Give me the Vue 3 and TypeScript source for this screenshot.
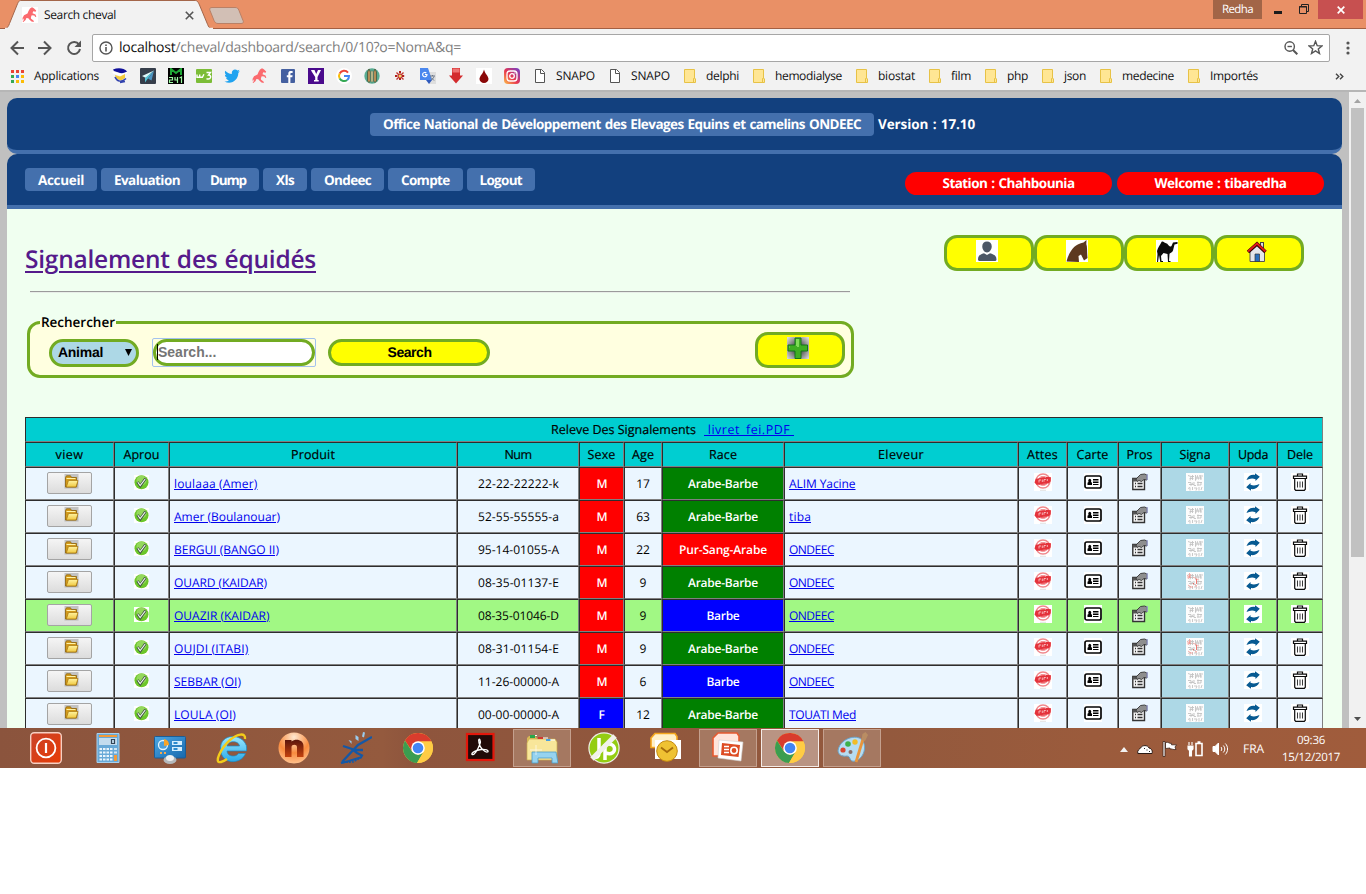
<script setup lang="ts">
import type { Directive } from 'vue'

interface Bookmark { icon: string; label?: string; width?: number }
interface Animal {
  name: string; nameW: number
  num: string
  sexe: 'M' | 'F'
  age: number
  race: string; raceW: number; raceColor: string
  owner: string; ownerW: number
  marked?: boolean
  active?: boolean
}

/* Spreads the letters of a label over the given width in pixels. */
const vFit: Directive<HTMLElement, number> = {
  mounted(el, { value }) {
    const width = el.getBoundingClientRect().width
    const count = (el.textContent ?? '').length
    if (value && count) el.style.letterSpacing = `${(value - width) / count}px`
  },
}

const bookmarks: Bookmark[] = [
  { icon: 'poste' }, { icon: 'plane' }, { icon: 'm241' }, { icon: 'w3' }, { icon: 'bird' },
  { icon: 'horse' }, { icon: 'facebook' }, { icon: 'yahoo' }, { icon: 'google' }, { icon: 'pencils' },
  { icon: 'flower' }, { icon: 'translate' }, { icon: 'redarrow' }, { icon: 'drop' }, { icon: 'insta' },
  { icon: 'page', label: 'SNAPO', width: 39 }, { icon: 'page', label: 'SNAPO', width: 39 },
  { icon: 'folder', label: 'delphi', width: 33 }, { icon: 'folder', label: 'hemodialyse', width: 67 },
  { icon: 'folder', label: 'biostat', width: 37 }, { icon: 'folder', label: 'film', width: 20 },
  { icon: 'folder', label: 'php', width: 21 }, { icon: 'folder', label: 'json', width: 22 },
  { icon: 'folder', label: 'medecine', width: 52 }, { icon: 'folder', label: 'Importés', width: 48 },
]

const nav = [
  { label: 'Accueil', width: 46 }, { label: 'Evaluation', width: 66 }, { label: 'Dump', width: 36 },
  { label: 'Xls', width: 18 }, { label: 'Ondeec', width: 47 }, { label: 'Compte', width: 48.5 },
  { label: 'Logout', width: 42.5 },
]

const columns = [
  { label: 'view', width: 28 }, { label: 'Aprou', width: 36 }, { label: 'Produit', width: 44 },
  { label: 'Num', width: 27 }, { label: 'Sexe', width: 28 }, { label: 'Age', width: 22 },
  { label: 'Race', width: 28 }, { label: 'Eleveur', width: 46 }, { label: 'Attes', width: 31 },
  { label: 'Carte', width: 32 }, { label: 'Pros', width: 26 }, { label: 'Signa', width: 31 },
  { label: 'Upda', width: 30 }, { label: 'Dele', width: 26 },
]

const green = { race: 'Arabe-Barbe', raceW: 70, raceColor: 'green' }
const blue = { race: 'Barbe', raceW: 33, raceColor: 'blue' }
const ondeec = { owner: 'ONDEEC', ownerW: 45 }

const animals: Animal[] = [
  { name: 'loulaaa (Amer)', nameW: 83.5, num: '22-22-22222-k', sexe: 'M', age: 17, ...green, owner: 'ALIM Yacine', ownerW: 66.5 },
  { name: 'Amer (Boulanouar)', nameW: 106, num: '52-55-55555-a', sexe: 'M', age: 63, ...green, owner: 'tiba', ownerW: 22 },
  { name: 'BERGUI (BANGO II)', nameW: 105, num: '95-14-01055-A', sexe: 'M', age: 22, race: 'Pur-Sang-Arabe', raceW: 88, raceColor: 'red', ...ondeec },
  { name: 'OUARD (KAIDAR)', nameW: 93, num: '08-35-01137-E', sexe: 'M', age: 9, ...green, ...ondeec, marked: true },
  { name: 'OUAZIR (KAIDAR)', nameW: 95.5, num: '08-35-01046-D', sexe: 'M', age: 9, ...blue, ...ondeec, active: true },
  { name: 'OUJDI (ITABI)', nameW: 74.5, num: '08-31-01154-E', sexe: 'M', age: 9, ...green, ...ondeec, marked: true },
  { name: 'SEBBAR (OI)', nameW: 67, num: '11-26-00000-A', sexe: 'M', age: 6, ...blue, ...ondeec },
  { name: 'LOULA (OI)', nameW: 62, num: '00-00-00000-A', sexe: 'F', age: 12, ...green, owner: 'TOUATI Med', ownerW: 67 },
]

const shortcuts = ['user', 'horsehead', 'camel', 'home']
const actions = ['stamp', 'card', 'props']
const tasks = [
  { icon: 'power' }, { icon: 'calc' }, { icon: 'panel' }, { icon: 'ie' }, { icon: 'nitro' }, { icon: 'splash' },
  { icon: 'chrome' }, { icon: 'acrobat' }, { icon: 'explorer', open: true }, { icon: 'jdown' }, { icon: 'outlook' },
  { icon: 'ppt', open: true }, { icon: 'chrome', open: true, front: true }, { icon: 'paint', open: true },
]
</script>

<template>
  <svg class="defs" width="0" height="0">
    <defs>
      <linearGradient id="gInsta" x1="0" y1="1" x2="1" y2="0"><stop offset="0" stop-color="#fdc04a" /><stop offset=".45" stop-color="#e8374f" /><stop offset="1" stop-color="#6a3fd0" /></linearGradient>
      <linearGradient id="gFolder" x1="0" y1="0" x2="0" y2="1"><stop offset="0" stop-color="#fff3a0" /><stop offset="1" stop-color="#f0c840" /></linearGradient>
      <radialGradient id="gBack" r=".65"><stop offset=".3" stop-color="#555" /><stop offset="1" stop-color="#d8d8d8" /></radialGradient>
      <linearGradient id="gPower" x1="0" y1="0" x2="1" y2="1"><stop offset="0" stop-color="#c9432a" /><stop offset="1" stop-color="#e83b04" /></linearGradient>
      <linearGradient id="gSky" x1="0" y1="0" x2="1" y2="1"><stop offset="0" stop-color="#4ba7e4" /><stop offset="1" stop-color="#1768ad" /></linearGradient>
      <linearGradient id="gIe" x1="0" y1="0" x2="0" y2="1"><stop offset="0" stop-color="#9be9ff" /><stop offset="1" stop-color="#29a9e8" /></linearGradient>
      <radialGradient id="gNitro" cy=".15" r=".85"><stop offset="0" stop-color="#ffe8d0" /><stop offset=".6" stop-color="#f98b3e" /><stop offset="1" stop-color="#ffc08c" /></radialGradient>
      <linearGradient id="gNitroN" x1="0" y1="0" x2="0" y2="1"><stop offset="0" stop-color="#5a150c" /><stop offset="1" stop-color="#c4420e" /></linearGradient>
    </defs>
    <symbol id="apps" viewBox="0 0 13 13">
      <path fill="#ea4335" d="M0 0h3v3H0zM5 0h3v3H5zM10 0h3v3h-3z" /><path fill="#34a853" d="M0 5h3v3H0zM0 10h3v3H0z" />
      <path fill="#4285f4" d="M5 5h3v3H5z" /><path fill="#fbbc05" d="M10 5h3v3h-3zM5 10h3v3H5zM10 10h3v3h-3z" />
    </symbol>
    <symbol id="horse" viewBox="0 0 16 16">
      <path fill="#fb6a6e" d="M10 0.300l1.800 1 2.400 2.200-.6 1.200-2.400-.4-.7 1.900 3 1.400.8 2.200-1 .3-1-1.600-2.600-.2-.8 2 .2 1.500 2.400 1.600.4 1.600-2.400-.5-2.200-2-1-1.300-1.900-.1-.8 2-2.200 1.800-.8-.4 1.300-1.600.2-1.800L.8 13.500.5 11 2 8.200 5.500 6.500 6.500 4 8 1.600z" />
    </symbol>
    <symbol id="poste" viewBox="0 0 16 16">
      <path fill="#10109a" d="M1 1.500C6-.5 12 0 15 3.500L11 6 2 3z" /><path fill="#fff" d="M0 3.500l9 2 6-1.500v1.500L9 8 1 5.500z" />
      <path fill="#f5cc3c" d="M3 7l5 1.500 5-2.500v4l-4 2.500-5-2z" /><path fill="none" stroke="#3343ae" stroke-width="1.500" d="M3 9c2 5 7 5.500 11 1.500M8 14.500l5-1" />
    </symbol>
    <symbol id="plane" viewBox="0 0 16 16"><rect width="16" height="16" rx="1" fill="#363e4b" /><path fill="#dff8fa" d="M14 2.500L2 8l4 2z" /><path fill="#56c1d4" d="M14 2.500L5 10v4.500L7.500 11z" /><path fill="#4d94c4" d="M14 2.500L8 10.500l3.500 2z" /></symbol>
    <symbol id="m241" viewBox="0 0 16 16"><rect width="16" height="16" /><path fill="none" stroke="#1fa635" stroke-width="2" d="M3 7V1l5 4 5-4v6" /><path fill="none" stroke="#9cf9a1" stroke-width="1.200" d="M1 9.500h3.500v2.500H1.500v2.500H5M7 9v3h3M9.500 9v6M11.500 10l2-1v6" /></symbol>
    <symbol id="w3" viewBox="0 0 16 16"><rect y="1" width="16" height="14" rx="1" fill="#7cbd37" /><path fill="none" stroke="#fff" stroke-width="1.400" d="M1 6.500v2.700h2.700V6.500v2.700h2.700l1.500-3M10.500 4.500h4L12.500 7c3.300 0 3 5-2 3.800" /></symbol>
    <symbol id="bird" viewBox="0 0 16 16"><path fill="#20a3f0" d="M.5 13.500c1.700.2 3.200-.2 4.500-1.200-1.500-.1-2.500-1-3-2.200h1.400C1.900 9.600.9 8.400.9 6.800l1.400.4C.9 6 .5 4.300 1.300 2.700c1.700 2 3.900 3.200 6.600 3.400C7.300 3.300 9.100 1.500 11 1.500c1 0 1.900.4 2.500 1.100l2-.8-1.300 1.900 1.700-.4-1.600 1.700C14.500 11.500 7.500 17.500.5 13.500z" /></symbol>
    <symbol id="facebook" viewBox="0 0 16 16"><rect x="1" y="1" width="14" height="14" rx="1" fill="#4560a0" /><path fill="#fff" d="M8.300 15V9.300H6.800V7.200h1.500V5.500C8.300 3.600 9.500 3 11 3h1.600v2h-1.200c-.8 0-1 .4-1 1v1.200h2.200l-.3 2.100h-1.900V15z" /></symbol>
    <symbol id="yahoo" viewBox="0 0 16 16"><rect width="16" height="16" fill="#4a0a8c" /><path fill="#fff" d="M3 2h3.500l1.700 4L10 2h3L9.500 9v3h1.200v1.500H6V12h1.200V9L3.500 3.300z" /></symbol>
    <symbol id="google" viewBox="0 0 16 16"><circle cx="8" cy="8" r="8" fill="#fff" /><path fill="none" stroke="#ea4335" stroke-width="2" d="M12 4.600A5 5 0 0 0 3.700 5.500" /><path fill="none" stroke="#fbbc05" stroke-width="2" d="M3.700 5.500a5 5 0 0 0 0 5" /><path fill="none" stroke="#34a853" stroke-width="2" d="M3.700 10.500a5 5 0 0 0 7.500 1.500" /><path fill="none" stroke="#4285f4" stroke-width="2" d="M11.200 12A5 5 0 0 0 13 8H8" /></symbol>
    <symbol id="pencils" viewBox="0 0 16 16"><ellipse cx="8" cy="8" rx="7.700" ry="7.700" fill="#58ac92" /><path fill="#b58d56" stroke="#4b5f44" stroke-width=".9" d="M3.500 4L5 1l1.500 3v9L5 14.500 3.500 13zM9.500 4L11 1l1.500 3v9L11 14.500 9.500 13z" /><path fill="#cdc08c" stroke="#4b7f6c" stroke-width=".6" d="M6.800 3h2.400v11H6.800z" /></symbol>
    <symbol id="flower" viewBox="0 0 16 16"><path stroke="#b0201c" stroke-width="2" d="M8 3v10M3 8h10" stroke-dasharray="2.500 .8" /><path stroke="#c4352c" stroke-width="1.400" d="M4.500 4.500l7 7M11.500 4.500l-7 7" /><circle cx="8" cy="8" r="1.300" fill="#f4d95c" /></symbol>
    <symbol id="translate" viewBox="0 0 16 16"><path fill="#dedede" d="M6 4h10v12H9z" /><path fill="#4a87ee" d="M0 0h8l4 12H0z" /><path fill="none" stroke="#fff" stroke-width="1.100" d="M6.300 5A2.200 2.200 0 1 0 7 6.500H5" /><path fill="none" stroke="#6b7788" d="M10 8h5M12.500 7v1M14 8.500c-.5 2-2 3-3 3.500M11 9.500l3 3" /><path fill="#2d59bd" d="M6 12h6l-3 4z" /></symbol>
    <symbol id="redarrow" viewBox="0 0 16 16"><path fill="#d32b2d" d="M4 0h8v7.500h3L8 15.500 1 7.500h3z" /><path fill="#ee7372" d="M4.500.5h7v4h-7z" /></symbol>
    <symbol id="drop" viewBox="0 0 16 16"><rect width="16" height="16" fill="#fff" /><path fill="#8a0808" d="M8 1.500C9 6 12.500 8 12.500 11a4.500 4 0 0 1-9 0C3.500 8 7 6 8 1.500z" /></symbol>
    <symbol id="insta" viewBox="0 0 16 16"><rect width="16" height="16" rx="4" fill="url(#gInsta)" /><rect x="3" y="3" width="10" height="10" rx="3" fill="none" stroke="#fff" stroke-width="1.300" /><circle cx="8" cy="8" r="2.300" fill="none" stroke="#fff" stroke-width="1.300" /><circle cx="11" cy="5" r=".7" fill="#fff" /></symbol>
    <symbol id="page" viewBox="0 0 16 16"><path fill="#fff" stroke="#555" d="M3.500 1.500h6l3 3v10h-9z" /><path fill="none" stroke="#555" d="M8.500 1.500v4h4" /></symbol>
    <symbol id="folder" viewBox="0 0 16 16"><path fill="#ffe694" stroke="#e7c246" d="M2.500 1.500h10v8.500l1 1v3.500h-11z" /><path fill="none" stroke="#e7c246" d="M11.500 14v-3.500h1" /></symbol>
    <symbol id="user" viewBox="0 0 22 22"><rect width="22" height="23" fill="#fff" /><path fill="#4c5766" d="M11 1.500c3 0 5 2 4.700 5.500-.2 2.500-2.200 5.500-4.700 5.500S6.500 9.500 6.300 7C6 3.500 8 1.500 11 1.500zM2 19.500c0-4 2-5 6-6.300L11 15l3-1.800c4 1.300 6.500 2.300 6.500 6.300 0 1.500-1 1.500-2 1.500H4.500c-1.500 0-2.500 0-2.500-1.500z" /></symbol>
    <symbol id="horsehead" viewBox="0 0 22 22"><rect width="22" height="23" fill="#fff" /><path fill="#5d3820" d="M.5 21.500C3 12 8 4 17.500 2.500L20.500 0l-.2 4c1.200 3 .5 8 1.200 14l-3.500 2.500-3-6-2.500 1.500.5 6z" /></symbol>
    <symbol id="camel" viewBox="0 0 22 22"><rect width="22" height="23" fill="#fff" /><path fill="#0b0b0b" d="M1 11c1-4 3-5.500 4.500-9C7 .5 9 4 11 3.500c1.500 2 3 4 4.500 2.500L17 2.500 21.500 2v1.800l-3 .7-1.500 6c-1 2.500-3 2-3.500 3.500L13 21h1.500v1H12l-.5-8-4-1-2.500 3 .5 5H7v1H4.300L3 15l-1 7H1l.5-8z" /></symbol>
    <symbol id="home" viewBox="0 0 22 22"><path fill="#444" d="M14 2h4v8h-4z" /><path fill="#ddd" d="M15 3h2v5h-2z" /><path fill="#e4e6ea" stroke="#555" d="M4 12v9.500h14.500V12L11 5z" /><path fill="none" stroke="#300" stroke-width="3.600" d="M2 12L11 4l8.500 8" /><path fill="none" stroke="#e11a1a" stroke-width="2" d="M2 11.500L11 3.500l8.500 8" /><path fill="#2a6fbd" stroke="#333" stroke-width=".7" d="M9 14h4.500v7.500H9z" /></symbol>
    <symbol id="plus" viewBox="0 0 22 22"><rect width="22" height="23" fill="url(#gBack)" /><path fill="#3fae22" stroke="#14741a" d="M8 1h6v7h6.500v6H14v7.500H8V14H1V8h7z" /><path fill="#9cee6d" opacity=".7" d="M9 2h3v8h-2v-1H2.500V11H2V9h7z" /></symbol>
    <symbol id="gold" viewBox="0 0 15 15"><rect x=".5" width="14" height="14.500" fill="#8a8a8a" opacity=".45" /><path fill="#d29a1b" stroke="#8d620a" stroke-width=".8" d="M1.500 3.500l1-1.700h4l1 1.700h5V7h1L12.500 13h-11z" /><path fill="url(#gFolder)" stroke="#a9760d" stroke-width=".7" d="M4.500 6.500H14l-2 6.500H2.300z" /><path stroke="#fff3a8" d="M2.500 4.500h9" /></symbol>
    <symbol id="check" viewBox="0 0 15 15"><rect width="15" height="15" fill="#fff" /><circle cx="7.500" cy="7.300" r="7" fill="#6cc62a" /><circle cx="7.500" cy="5.500" r="5" fill="#a4e070" opacity=".7" /><path fill="none" stroke="#435345" stroke-width="2.700" d="M3.500 7l2.800 4L11.500 3.500" /><path fill="none" stroke="#f4fff0" stroke-width="1.100" d="M3.800 7.200L6.200 10.500 11.200 4" /></symbol>
    <symbol id="stamp" viewBox="0 0 18 18"><rect width="18" height="18" fill="#fff" /><circle cx="9" cy="8" r="7" fill="none" stroke="#f0888c" stroke-width="1.400" /><circle cx="9" cy="8" r="4.900" fill="#ee6268" /><path fill="#e4323b" d="M.5 9.500l1.200-3.700L7 5l5-1.300 5 .5-.3 4-2 2.300-4.700-.3-4 1.500-3.500 0z" /><path stroke="#fbd3d4" stroke-width=".8" fill="none" d="M5 9.500V7h2M8.300 9V6.500M10 8.700V6.500h1.800M13.300 8V6" /><path stroke="#f3b6b8" stroke-width=".7" fill="none" d="M6 4.500c2-1.200 4-1.200 6 0M6 11.800c2 1.200 4 1 6-.3" /><path stroke="#ccc" d="M6 17.300h6" stroke-width=".6" /></symbol>
    <symbol id="card" viewBox="0 0 18 18"><rect width="18" height="18" fill="#fff" /><rect x="1" y="3" width="16" height="12" rx="1.800" fill="none" stroke="#050505" stroke-width="1.700" /><path d="M3.500 12V9.800l1-.9a1.500 2 0 1 1 2.500 0l1 .9V12zM9 6h5.500v1.500H9zM9 8.500h5.500V10H9zM9 11h5.500v1H9z" /></symbol>
    <symbol id="props" viewBox="0 0 18 18"><path fill="#f4f4f4" stroke="#333" stroke-width="1.400" d="M1.800 5.500h11.700v11H1.800z" /><path fill="#555" d="M2 5.500h3.500v3H2z" /><path stroke="#333" stroke-width="1.300" d="M4 10.500h1M6.500 10.500h5M4 13.500h1M6.500 13.500h5" /><path fill="#8e8e8e" stroke="#333" stroke-width=".9" d="M5 6l4.500-4.500 4-.5 2.500 1v5l-3-.5-2.500 2L8 7.500 6 8.500z" /><path fill="#9ba0d0" d="M15.500 1h1.300v6h-1.300z" /></symbol>
    <symbol id="signa" viewBox="0 0 18 18"><rect width="18" height="18" fill="#fdfdfd" /><g fill="none" stroke="#c3c3c3" stroke-width=".9"><path d="M2 2.500l3 1-1 4M6.500 2v5M5 3.500h3M9.500 2v5.500l2-5 1 4M14 2l1 5M13 3h4M3.500 5.500h4M11 5h5" /><path d="M2 9.500h3v3l2-3M8 9v3.500h2M11 9.500h5M12 8.500v4M15 9v3M2 15.500l2-1v3M6.500 14v3M8 15h3l-1 2.500M13 14v3.500M16 14l-1 3M3 11.500h5M11 12h4" /></g></symbol>
    <symbol id="signared" viewBox="0 0 18 18"><g fill="none" stroke="#f09a94" stroke-width=".8"><path d="M1 3l4 3M5 2L2 7M3.500 1v5M1 5h4M7 5l6 3M2 13l3 2M4 15h3" /><path stroke="#e8594f" d="M7.500 11v1.500M10.500 7v5M10 13v1.500" /></g></symbol>
    <symbol id="update" viewBox="0 0 18 18"><rect width="18" height="18" fill="#fff" /><path fill="#075a92" d="M2.500 7C4 3 7 1.300 11 2V.3l4.800 3.500L11.500 8V6.200C8.500 5 5.500 5.500 2.500 7zM15.500 11c-1.500 4-4.500 5.700-8.500 5v1.700l-4.800-3.500L6.500 10v1.800c3 1.200 6 .7 9-.8z" /></symbol>
    <symbol id="trash" viewBox="0 0 18 18"><rect width="18" height="18" fill="#fff" /><path fill="none" stroke="#0c0c0c" stroke-width="1.200" d="M2.500 3.200h13v2.300h-13zM6.500 3v-2h5v2M3.700 5.700v10.500l1 1.200h8.600l1-1.200V5.700" /><path stroke="#222" stroke-width=".9" d="M6.500 8.500v6M9 8.500v6M11.500 8.500v6" /></symbol>
    <symbol id="power" viewBox="0 0 32 32"><rect x=".7" y=".7" width="30.600" height="30.600" rx="3.500" fill="url(#gPower)" stroke="#f6cfc2" stroke-width="1.400" /><circle cx="16" cy="16" r="9.400" fill="none" stroke="#fff" stroke-width="1.800" /><path stroke="#fff" stroke-width="2.200" d="M16 11v10" /></symbol>
    <symbol id="calc" viewBox="0 0 32 32"><path fill="#68a9d7" stroke="#a9d1ed" d="M5 1.500h22v29H5z" /><path fill="#f29a3a" d="M7 3h18v2H7z" /><path fill="#c3dcee" d="M7 6h18v7H7z" /><path fill="none" stroke="#345" stroke-width="1.200" d="M19.500 7.500h3v4h-3z" /><path stroke="#eaf5fc" stroke-width="2.200" stroke-dasharray="2.500 1" d="M7.500 17h14M7.500 20.500h14M7.500 24h14M7.500 27.500h14" /><path stroke="#cfe4f2" stroke-width="2.200" d="M22 17h3M22 20.500h3" /><path fill="#f29a3a" d="M22 23h3v6h-3z" /></symbol>
    <symbol id="panel" viewBox="0 0 32 32"><rect x=".5" y="4.500" width="31" height="21.500" rx="1" fill="url(#gSky)" stroke="#1c5d95" /><circle cx="9" cy="13" r="4.500" fill="#4ba0dc" stroke="#e2f4ff" stroke-width="1.300" /><path fill="#f7a428" d="M10 7a6 6 0 0 1 5 6l-5 1z" /><path fill="#d4efff" d="M18 9h10v4H18zM18 15h10v4H18z" /><path fill="#2c8ccf" d="M19.500 10h4v2h-4zM19.500 16h4v2h-4z" /><path fill="#f5aa4f" d="M6 20h2v2H6zM10 20h2v2h-2z" /><ellipse cx="16" cy="28" rx="6.500" ry="4" fill="#b4b8bb" /><ellipse cx="16" cy="26" rx="4" ry="3" fill="#f0f0f0" /></symbol>
    <symbol id="ie" viewBox="0 0 32 32"><path fill="url(#gIe)" stroke="#178bc8" stroke-width=".7" d="M30.500 19H11c.3 6 9 6.500 11.500 2.500h7C25 33 5 33 4.500 17S26 1 30.300 13.500c.3 2 .4 3.500.2 5.500zM11 14h12.500c-.5-5.500-11.500-6-12.500 0z" /><path fill="none" stroke="#f3cc1b" stroke-width="2.400" d="M29 7c1-7-8-5-15 1C5 16-3 32 5 30c2-.4 4-1.500 6-3" /></symbol>
    <symbol id="nitro" viewBox="0 0 32 32"><circle cx="16" cy="16" r="15.500" fill="url(#gNitro)" /><path fill="url(#gNitroN)" d="M7 8h6.500v1.500C18 6 25.500 8 25.500 14v11H19V15c0-3-5.500-3-5.500 0v10H7z" /></symbol>
    <symbol id="splash" viewBox="0 0 32 32"><path fill="none" stroke="#1558a6" stroke-width="2.300" d="M32 5L18 13 2 30M3 14l9 3 5 4 6 3M1 31l8-2 13-4M15 18h8" /><path stroke="#1558a6" stroke-width="1.400" stroke-dasharray="2 1" fill="none" d="M3 30.500l10-.5 9-5" /><path fill="#9acbee" d="M23 0l2 .5-1 5-2-1zM15.500 3l3 2 0 4-3-2zM8.500 8l3 1v3z" /></symbol>
    <symbol id="chrome" viewBox="0 0 32 32"><circle cx="16" cy="16" r="15" fill="#fc4" /><path fill="#d93c2d" d="M3 8.500A15 15 0 0 1 29.500 9.500H16L10 19z" /><path fill="#3b9d50" d="M3 8.500A15 15 0 0 0 15 31l6.500-11L16 23l-6-3.500z" /><path fill="#fc4" d="M29.500 9.500A15 15 0 0 1 15 31l7-12 0-6-3-3.500z" /><circle cx="16" cy="16" r="6.800" fill="#fff" /><circle cx="16" cy="16" r="5.300" fill="#4285f4" /></symbol>
    <symbol id="acrobat" viewBox="0 0 32 32"><rect x="3" y="2" width="26.500" height="26" fill="#210a08" stroke="#e3170b" stroke-width="2.200" /><path fill="none" stroke="#fff" stroke-width="1.300" d="M8 22.500c-1-2 5-4.500 9-5 5-.5 7.500 1 7 2.200-2 1.300-9-3-9.300-11.500.5-2.500 2.300 0 1.300 3.500-2 6-6 12-8 10.800z" /></symbol>
    <symbol id="explorer" viewBox="0 0 32 32"><path fill="#d7b955" d="M1 6l2-2h6l2 2v22H1z" /><path fill="#f8e69a" stroke="#ccae4e" stroke-width=".7" d="M3 7h26l2 3v18H1V11z" /><path fill="#2aa64a" d="M4 3h5v3H4z" /><path fill="#cf3830" d="M12 5h5v2h-5z" /><path fill="#4aa0e0" d="M20 7h5v2h-5z" /><path stroke="#fff" d="M9 3.500h2M17 6h5M24 8h5" /><path fill="#96d3ef" stroke="#4b9cc6" stroke-width=".8" d="M6 20h24l2 11h-6v-5H12v5H6z" /><path stroke="#fff" stroke-width=".8" d="M4 18h12M10 13v10" opacity=".8" /></symbol>
    <symbol id="jdown" viewBox="0 0 32 32"><circle cx="16" cy="16" r="15.700" fill="#f0f0ea" /><circle cx="16" cy="16" r="14.500" fill="#94cd13" /><path fill="none" stroke="#fff" stroke-width="3.500" d="M11 6v15c0 4-2 5-5 4M17 12v16M17 13c12-5 13 12 1 8" /><path stroke="#f1f2ea" stroke-width="5" d="M27 4L4 27" /></symbol>
    <symbol id="outlook" viewBox="0 0 32 32"><path fill="#fff0c8" stroke="#f5a61c" stroke-width="1.600" d="M5 1.500h20l2 3v11H1V6z" /><path fill="#fff" d="M5 8h26v19H5z" /><circle cx="17" cy="19" r="10.300" fill="#efc233" stroke="#c58a10" /><path fill="none" stroke="#a66d0c" stroke-width="1.800" d="M11 15.500l6 4.500 6-4.500" /></symbol>
    <symbol id="ppt" viewBox="0 0 32 32"><path fill="#ffe4da" stroke="#e65a30" stroke-width="1.600" d="M6 1h19l2 3v20H1V6z" /><path fill="#fff" stroke="#d0d0d0" stroke-width=".6" d="M7 8l24 2-2 19-23-3z" /><path fill="#dd4c24" d="M10 11l18 2-1.500 12L9 23z" /><path stroke="#fff" stroke-width="1.600" d="M12 14.500h5M12 17.500h5M12 20.500h5" /><circle cx="22" cy="18.500" r="3.200" fill="none" stroke="#fff" stroke-width="1.600" /></symbol>
    <symbol id="paint" viewBox="0 0 32 32"><path fill="#b6dcf2" stroke="#6ba6cc" d="M2 19C3 8 18 2 25 7c7 6 3 20-6 22-6 1.500-4-5-8-5-4 .500-8 0-9-5z" /><circle cx="7" cy="18" r="2.600" fill="#d74731" /><circle cx="12" cy="12" r="2.800" fill="#3cb14a" /><circle cx="19" cy="10" r="2.700" fill="#f2bc27" /><circle cx="14.500" cy="20" r="2" fill="#8a6d66" /><path stroke="#e9953c" stroke-width="2.800" d="M27 7l-7 23" /><path fill="#b98d63" d="M25.500 8l1-6 3-2 2.500 3-3 6z" /></symbol>
  </svg>

  <div class="screen">
    <header class="titlebar">
      <div class="tab">
        <svg class="tabshape" width="208" height="29"><path d="M0 28.500C3 28 3.500 26 4.500 23.500L12 5C13.500 1.500 14 .5 16 .5H190c2 0 3 1 4.500 4.500L202 23c2 5 2.500 5.500 6 5.500z" fill="#f2f2f2" stroke="#a4664a" /><path d="M0 28.500h208" stroke="#f2f2f2" stroke-width="1.500" /></svg>
        <div class="tabinner">
          <span class="fav"><svg width="16" height="16"><use href="#horse" /></svg></span>
          <span v-fit="72" class="fit">Search cheval</span>
          <svg class="tabclose" width="9" height="9" viewBox="0 0 9 9"><path d="M.8.8l7.400 7.400M8.200.8L.8 8.200" stroke="#555" stroke-width="1.600" /></svg>
        </div>
      </div>
      <svg class="newtab" width="35" height="18"><path d="M3 .5h23c2 0 3 .5 4 3l4 10c1 2 0 3-2 3H9c-2 0-3-1-4-3l-4-10c-.8-2 0-3 2-3z" fill="#d2bfb5" stroke="#b98066" /></svg>
      <div class="controls">
        <span class="profile"><span v-fit="31" class="fit">Redha</span></span>
        <svg class="minimize" width="8" height="3"><path d="M0 0h8v3H0z" fill="#1c1c1c" /></svg>
        <svg class="restore" width="10" height="10"><path d="M2.500 2V.5h7v7H8M.5 2.500h7v7h-7z" fill="none" stroke="#222" /><path d="M0 3h8" stroke="#222" /></svg>
        <span class="close"><svg width="8" height="8"><path d="M.7.7l6.600 6.600M7.300.7L.7 7.300" stroke="#fff" stroke-width="1.700" /></svg></span>
      </div>
    </header>

    <div class="toolbar">
      <svg class="arrows" width="44" height="16" fill="none" stroke="#555" stroke-width="2">
        <path d="M15 8H3M9 1.500L2.500 8 9 14.500" /><path d="M29 8h12M35 1.500L41.500 8 35 14.500" />
      </svg>
      <svg class="reload" width="16" height="16" fill="none" stroke="#555" stroke-width="2"><path d="M13 4.500A6 6 0 1 0 14 9" /><path d="M15 .5v6.500H8.500z" fill="#555" stroke="none" /></svg>
      <div class="omnibox">
        <svg width="14" height="14" fill="none" stroke="#555" stroke-width="1.400"><circle cx="7" cy="7" r="6" /><path d="M7 6v4.500M7 3.500v1.400" stroke-width="1.600" /></svg>
        <span class="url"><span v-fit="342" class="fit"><b>localhost</b>/cheval/dashboard/search/0/10?o=NomA&amp;q=</span></span>
        <svg class="lens" width="14" height="14" fill="none" stroke="#555" stroke-width="1.400"><circle cx="5.700" cy="5.500" r="4.700" /><path d="M3.500 5.500h4.400" /><path d="M9 9l4.300 4.300" stroke-width="2" /></svg>
        <svg width="15" height="15" fill="none" stroke="#555" stroke-width="1.400"><path d="M7.500 1.300l1.700 4.400 4.700.3-3.600 2.900 1.200 4.600-4-2.600-4 2.600 1.200-4.600L1.100 6l4.700-.3z" /></svg>
      </div>
      <svg class="kebab" width="4" height="14" fill="#555"><circle cx="2" cy="2" r="1.600" /><circle cx="2" cy="7" r="1.600" /><circle cx="2" cy="12" r="1.600" /></svg>
    </div>

    <div class="bookmarks">
      <svg width="13" height="13"><use href="#apps" /></svg>
      <span class="applabel"><span v-fit="65" class="fit">Applications</span></span>
      <span v-for="(b, i) in bookmarks" :key="i" class="bookmark">
        <svg width="16" height="16"><use :href="`#${b.icon}`" /></svg>
        <span v-if="b.label" v-fit="b.width ?? 0" class="fit marklabel">{{ b.label }}</span>
      </span>
      <svg class="more" width="9" height="7" fill="none" stroke="#444" stroke-width="1.400"><path d="M1 .8l2.800 2.700L1 6.200M5 .8l2.800 2.700L5 6.200" /></svg>
    </div>

    <div class="viewport">
      <main class="page">
        <div class="banner">
          <span class="pill"><span v-fit="478" class="fit">Office National de Développement des Elevages Equins et camelins ONDEEC</span></span>
          <span v-fit="97" class="fit">Version : 17.10</span>
        </div>
        <nav class="menu">
          <span v-for="n in nav" :key="n.label" class="pill"><span v-fit="n.width" class="fit">{{ n.label }}</span></span>
          <span class="status first"><span v-fit="132" class="fit">Station : Chahbounia</span></span>
          <span class="status"><span v-fit="132" class="fit">Welcome : tibaredha</span></span>
        </nav>
        <section class="content">
          <div class="topline">
            <h1><span v-fit="291" class="fit">Signalement des équidés</span></h1>
            <div class="shortcuts">
              <span v-for="s in shortcuts" :key="s" class="iconbtn"><svg width="22" height="23" viewBox="0 0 22 23"><use :href="`#${s}`" width="22" height="22" /></svg></span>
            </div>
          </div>
          <div class="rule"></div>
          <fieldset class="search">
            <legend><span v-fit="74" class="fit">Rechercher</span></legend>
            <div class="fields">
              <div class="select"><span v-fit="45" class="fit">Animal</span><svg width="7" height="7"><path d="M0 0h7L3.500 7z" /></svg></div>
              <div class="ring"><input type="text" placeholder="Search..." /><i class="caret"></i></div>
              <button class="submit" type="button"><span v-fit="44" class="fit">Search</span></button>
              <span class="iconbtn add"><svg width="22" height="23" viewBox="0 0 22 23"><use href="#plus" width="22" height="22" /></svg></span>
            </div>
          </fieldset>

          <div class="table">
            <div class="caption cell head">
              <span v-fit="145" class="fit">Releve Des Signalements</span>
              <a v-fit="90" class="fit">&nbsp;livret_fei.PDF&nbsp;</a>
            </div>
            <div class="row headrow">
              <div v-for="c in columns" :key="c.label" class="cell head"><span v-fit="c.width" class="fit">{{ c.label }}</span></div>
            </div>
            <div v-for="a in animals" :key="a.name" class="row" :class="{ active: a.active }">
              <div class="cell"><span class="open"><svg width="15" height="15"><use href="#gold" /></svg></span></div>
              <div class="cell"><svg class="checkicon" width="15" height="15"><use href="#check" /></svg></div>
              <div class="cell left"><a v-fit="a.nameW" class="fit">{{ a.name }}</a></div>
              <div class="cell number"><span v-fit="81" class="fit">{{ a.num }}</span></div>
              <div class="cell tinted" :class="a.sexe === 'M' ? 'red' : 'blue'"><span v-fit="a.sexe === 'M' ? 10 : 6" class="fit">{{ a.sexe }}</span></div>
              <div class="cell"><span class="fit">{{ a.age }}</span></div>
              <div class="cell tinted" :class="a.raceColor"><span v-fit="a.raceW" class="fit">{{ a.race }}</span></div>
              <div class="cell left"><a v-fit="a.ownerW" class="fit">{{ a.owner }}</a></div>
              <div v-for="k in actions" :key="k" class="cell"><svg class="act" width="18" height="18"><use :href="`#${k}`" /></svg></div>
              <div class="cell pale"><svg class="act" width="18" height="18"><use href="#signa" /><use v-if="a.marked" href="#signared" /></svg></div>
              <div class="cell"><svg class="act" width="18" height="18"><use href="#update" /></svg></div>
              <div class="cell"><svg class="act" width="18" height="18"><use href="#trash" /></svg></div>
            </div>
          </div>
        </section>
      </main>
      <div class="scrollbar">
        <svg width="7" height="4"><path d="M3.500 0L7 4H0z" fill="#a3a3a3" /></svg>
        <div class="thumb"></div>
        <svg class="down" width="7" height="4"><path d="M3.500 4L7 0H0z" fill="#505050" /></svg>
      </div>
    </div>

    <footer class="taskbar">
      <span v-for="(t, i) in tasks" :key="i" class="task" :class="{ opened: t.open, front: t.front }">
        <svg width="32" height="32"><use :href="`#${t.icon}`" /></svg>
      </span>
      <div class="tray">
        <svg width="8" height="5"><path d="M4 0l4 5H0z" fill="#f2f2f2" /></svg>
        <svg width="16" height="11"><path d="M.8 9.500C-.2 6 3 5 3.500 4 5 .8 11 .8 12 4c3 .5 3.800 3.500 3 5.500z" fill="#fff" stroke="#2b1a14" /><path d="M7 4.500h1M9.500 6h1M12 7.500h1" stroke="#222" /></svg>
        <svg width="16" height="16" fill="#fff" stroke="#3e241a" stroke-width=".8"><path d="M1 .5h2v15H1zM3.500 1.500c3-1 4 1.500 6 .8v1.500h5L13 6l1 2.500c-3 .5-4-1-6-.5V7l-4.500.5z" /></svg>
        <svg width="16" height="16" fill="none" stroke="#fff" stroke-width="1.600"><path d="M2 1v3M5 1v3M1 5h5v3L4.500 9.500V15h-2V9.500L1 8z" stroke-width="1.100" fill="#fff" /><path d="M9 2.500h6v12H9zM10.500 1h3" /></svg>
        <svg width="16" height="14" fill="none" stroke="#fff" stroke-width="1"><path d="M1 4.500h2L6.500 1v12L3 9.500H1z" fill="#fff" /><path d="M9 5c1 1 1 3 0 4M11.300 3.500c2 2 2 5 0 7M13.300 1.500c3 3 3 8 0 11" /></svg>
      </div>
      <span v-fit="21" class="fit lang">FRA</span>
      <div class="clock"><span v-fit="28" class="fit">09:36</span><span v-fit="58" class="fit">15/12/2017</span></div>
    </footer>
  </div>
</template>

<style>
body { margin: 0; background: #fff; }
</style>

<style scoped>
* { box-sizing: border-box; }
svg { display: block; flex: none; }
.defs { position: absolute; }
.fit { display: inline-block; white-space: nowrap; flex: none; text-rendering: geometricPrecision; }
.screen { width: 1366px; height: 768px; overflow: hidden; display: flex; flex-direction: column; font: 12px/16px "Open Sans", "Noto Sans", sans-serif; color: #111; }

.titlebar { height: 29px; flex: none; background: #e99066; border-bottom: 1px solid #a35f43; display: flex; padding-left: 5px; }
.tab { position: relative; width: 208px; height: 29px; flex: none; }
.tabshape { position: absolute; left: 0; top: 0; }
.tabinner { position: relative; display: flex; align-items: center; padding: 7px 0 0 17px; }
.fav { background: #fff; margin-right: 6px; }
.tabclose { margin-left: 68.500px; }
.newtab { margin: 7px 0 0 -4px; }
.controls { margin-left: auto; display: flex; align-items: flex-start; width: 153px; }
.profile { width: 49px; height: 19px; background: #a26547; color: #fff; text-align: center; font-size: 11.500px; line-height: 18px; }
.minimize { margin: 11px 0 0 12px; }
.restore { margin: 4px 0 0 17px; }
.close { margin-left: 9px; width: 45px; height: 19px; background: #c75050; display: flex; justify-content: center; align-items: center; }

.toolbar { height: 33px; flex: none; background: #f2f2f2; display: flex; align-items: center; padding: 4px 16px 0 9px; }
.arrows { margin-right: 13px; }
.reload { margin-right: 10px; }
.omnibox { width: 1238px; height: 28px; border: 1px solid #a6a6a6; border-radius: 2px; background: #fff; display: flex; align-items: center; padding: 0 6px; }
.url { margin-left: 6px; flex: 1; font-size: 14px; line-height: 20px; color: #808080; }
.url b { font-weight: 400; color: #111; }
.lens { margin-right: 10px; }
.kebab { margin-left: auto; }

.bookmarks { height: 29px; flex: none; background: #f2f2f2; border-bottom: 1px solid #b6b6b6; display: flex; align-items: center; padding: 0 22px 0 11px; }
.applabel { margin: 0 13px 0 10px; display: flex; width: 65px; }
.bookmark { display: flex; align-items: center; margin-right: 12px; }
.marklabel { margin-left: 8px; }
.more { margin-left: auto; }

.viewport { height: 637px; flex: none; display: flex; background: #c0c0c0; border-top: 1px solid #b6b6b6; overflow: hidden; }
.page { width: 1335px; margin: 6px 7px 0; flex: none; display: flex; flex-direction: column; }
.banner { height: 56px; flex: none; background: #12407e; border-bottom: 4px solid #4470ad; border-radius: 10px; display: flex; justify-content: center; align-items: flex-start; gap: 4px; padding: 15px 4px 0 0; color: #fff; font-weight: 700; font-size: 13.500px; line-height: 23px; word-spacing: 1px; }
.pill { background: #4470ad; border-radius: 4px; height: 23px; line-height: 24px; padding: 0 13px; color: #fff; font-weight: 700; font-size: 13.500px; }
.banner .pill { line-height: 22px; }
.menu { height: 55px; flex: none; background: #12407e; border-bottom: 4px solid #4470ad; border-radius: 10px 10px 0 0; display: flex; gap: 4px; padding: 14px 18px 0; }
.status { width: 207px; height: 23px; margin: 4px 0 0 1px; background: red; border-radius: 12px; color: #fff; font-weight: 700; font-size: 13.500px; line-height: 23px; text-align: center; word-spacing: 1px; }
.first { margin-left: auto; }

.content { flex: none; height: 525px; background: #f0fff0; padding-left: 18px; }
.topline { height: 82px; display: flex; justify-content: space-between; }
h1 { margin: 32px 0 0; font-size: 24.500px; line-height: 36px; font-weight: 600; color: #551a8b; }
h1 .fit { text-decoration: underline; text-decoration-thickness: 2px; text-underline-offset: 3px; word-spacing: 1px; }
.shortcuts { display: flex; margin: 26px 38px 0 0; }
.iconbtn { width: 90px; height: 36px; border: 3px solid #72ab22; border-radius: 13px; background: #ff0; display: flex; padding: 2px 0 0 29px; }
.rule { width: 820px; height: 2px; margin-left: 5px; border-top: 1px solid #9b9b9b; border-bottom: 1px solid #e8eee8; }
.search { width: 827px; height: 65px; margin: 20px 0 0 2px; padding: 0 6px 0 10px; border: 3px solid #72ab22; border-radius: 13px; background: #ffffe0; }
legend { padding: 0 1px; height: 19px; font-size: 13.500px; line-height: 19px; font-weight: 600; color: #000; }
.fields { display: flex; align-items: flex-start; font-family: "Liberation Sans", Arial, sans-serif; font-weight: 700; font-size: 14px; padding-left: 9px; }
.select { width: 90px; height: 28px; margin-top: 7px; border: 3px solid #72ab22; border-radius: 14px; background: #add8e6; display: flex; align-items: center; justify-content: space-between; padding: 0 4px 2px 6px; color: #000; }
.ring { position: relative; margin: 6px 0 0 13px; width: 164px; height: 29px; border: 1px solid #a3c2ee; border-radius: 2px; }
.ring input { display: block; width: 162px; height: 27px; border: 3px solid #72ab22; border-radius: 14px; padding: 0 2px 2px; background: #fff; font: inherit; outline: none; }
.ring input::placeholder { color: #757575; }
.caret { position: absolute; left: 4px; top: 5px; width: 1px; height: 16px; background: #000; }
.submit { width: 162px; height: 27px; margin: 7px 0 0 12px; border: 3px solid #72ab22; border-radius: 14px; background: #ff0; font: inherit; color: #000; padding: 0 0 2px 1px; }
.add { margin-left: auto; }

.table { width: 1298px; margin-top: 39px; font-size: 12px; color: #000; }
.row { display: grid; grid-template-columns: 89px 55px 288px 122px 45px 38px 122px 234px 49px 51px 43px 68px 48px 46px; height: 33px; }
.headrow { height: 25px; }
.cell { border: 1px solid; border-color: #2d2d2d #808080 #808080 #2d2d2d; background: #ebf6ff; display: flex; justify-content: center; align-items: center; overflow: hidden; }
.active .cell { background: #a1f884; }
.cell.head { background: #00ced1; font-size: 12.500px; -webkit-text-stroke: .2px #000; }
.caption { height: 25px; gap: 8px; padding-right: 3px; }
.caption a { -webkit-text-stroke: 0; }
a { color: #00e; text-decoration: underline; }
.cell.left { justify-content: flex-start; padding-left: 4px; }
.cell.number { padding-left: 1px; }
.cell.tinted { color: #fff; font-weight: 600; }
.row .cell.red { background: red; }
.row .cell.blue { background: blue; }
.row .cell.green { background: green; }
.row .cell.pale { background: #add8e6; }
.open { width: 45px; height: 22px; margin-bottom: 1px; border: 1px solid #a4a4a4; border-radius: 2px; background: linear-gradient(#f5f5f5, #dcdcdc); display: flex; padding: 1px 0 0 16px; }
.checkicon { margin-bottom: 2px; }
.act { margin-bottom: 3px; }

.scrollbar { width: 17px; height: 637px; background: #f1f1f1; display: flex; flex-direction: column; align-items: center; padding-top: 7px; }
.thumb { width: 13px; height: 449px; margin-top: 5px; background: #c1c1c1; }
.down { margin-top: 160px; }

.taskbar { height: 40px; flex: none; background: linear-gradient(90deg, #8b543d 0, #945a3e 28%, #8e553d 30%, #93593d 65%, #9b5b3c 80%, #a05c3c); display: flex; align-items: center; padding-left: 17px; color: #fff; }
.task { width: 58px; height: 38px; margin-right: 4px; display: flex; align-items: center; justify-content: center; flex: none; }
.opened { border: 1px solid #c4a08e; background: #a57861; }
.front { background: #b99483; border-color: #f5ece8; }
.tray { display: flex; align-items: center; gap: 8.500px; margin-left: 235px; padding-top: 2px; }
.tray svg + svg { margin-left: .5px; }
.lang { margin-left: 15px; padding-top: 1px; }
.clock { margin-left: 17px; width: 60px; display: flex; flex-direction: column; align-items: center; line-height: 17px; font-size: 11.500px; margin-top: 1px; }
</style>
